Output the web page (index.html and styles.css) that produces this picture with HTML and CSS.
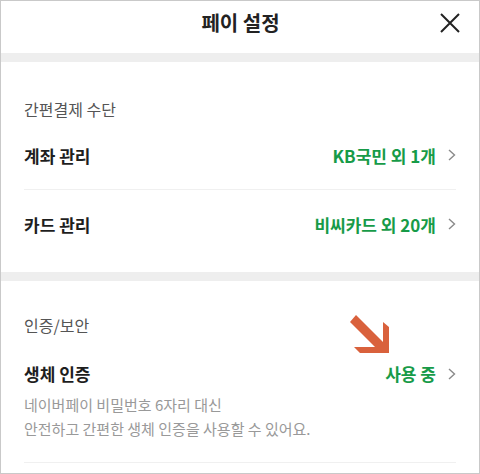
FILE: index.html
```html
<!DOCTYPE html>
<html>
<head>
  <title>페이 설정</title>
  <link rel="stylesheet" href="styles.css">
</head>
<body>
  <div class="page">
    <header class="topbar">
      <span></span>
      <h1>페이 설정</h1>
      <button class="close" aria-label="닫기">
        <svg width="20" height="20" viewBox="0 0 20 20"><path d="M1 1 L19 19 M19 1 L1 19" stroke="#222" stroke-width="2" fill="none"/></svg>
      </button>
    </header>

    <div class="band"></div>

    <section class="group">
      <h2>간편결제 수단</h2>
      <div class="row">
        <span class="label">계좌 관리</span>
        <span class="value">KB국민 외 1개</span>
        <svg class="chev" width="8" height="12" viewBox="0 0 8 12"><path d="M1 1 L6.5 6 L1 11" stroke="#8a8a8a" stroke-width="1.4" fill="none"/></svg>
      </div>
      <div class="row">
        <span class="label">카드 관리</span>
        <span class="value">비씨카드 외 20개</span>
        <svg class="chev" width="8" height="12" viewBox="0 0 8 12"><path d="M1 1 L6.5 6 L1 11" stroke="#8a8a8a" stroke-width="1.4" fill="none"/></svg>
      </div>
    </section>

    <div class="band"></div>

    <section class="group">
      <h2>인증/보안</h2>
      <div class="item">
        <div class="row-top">
          <span class="label">생체 인증</span>
          <span class="value">사용 중</span>
          <svg class="chev" width="8" height="12" viewBox="0 0 8 12"><path d="M1 1 L6.5 6 L1 11" stroke="#8a8a8a" stroke-width="1.4" fill="none"/></svg>
        </div>
        <p class="desc">네이버페이 비밀번호 6자리 대신<br>안전하고 간편한 생체 인증을 사용할 수 있어요.</p>
      </div>
    </section>

    <svg class="pointer" width="46" height="44" viewBox="0 0 46 44">
      <polygon points="12,5 39,32 39,12 45,17 45,43 16,43 10,37 31,37 6,12" fill="#d9613c"/>
    </svg>
  </div>
</body>
</html>
```

FILE: styles.css
```css
body {
  margin: 0;
  font-family: "Noto Sans CJK KR", "Noto Sans", sans-serif;
  background: #fff;
}

.page {
  position: relative;
  width: 480px;
  height: 474px;
  box-sizing: border-box;
  border: 1px solid #c9c9c9;
  overflow: hidden;
}

.topbar {
  height: 52px;
  box-sizing: border-box;
  display: grid;
  grid-template-columns: 1fr auto 1fr;
  align-items: center;
  padding: 0 19px 8px 20px;
}

.topbar h1 {
  margin: 0;
  font-size: 20px;
  line-height: 26px;
  font-weight: 700;
  color: #222;
}

.close {
  justify-self: end;
  background: none;
  border: none;
  padding: 0;
  width: 20px;
  height: 20px;
  cursor: pointer;
}

.band {
  height: 9px;
  background: #eeeeee;
}

.group {
  padding: 36px 23px 14px 23px;
}

.group h2 {
  margin: 0 0 1px;
  font-size: 16px;
  line-height: 22px;
  font-weight: 400;
  color: #555;
}

.group + .band + .group {
  padding-top: 33px;
}

.group + .band + .group h2 {
  margin-bottom: 4px;
}

.row {
  height: 68px;
  display: flex;
  align-items: center;
}

.row + .row {
  border-top: 1px solid #f0f0f0;
}

.label {
  flex: 1;
  font-size: 17px;
  font-weight: 700;
  color: #1e1e1e;
}

.value {
  font-size: 17px;
  font-weight: 700;
  color: #179b48;
}

.chev {
  margin-left: 12px;
}

.item {
  padding: 22px 0 21px;
  border-bottom: 1px solid #f0f0f0;
}

.row-top {
  display: flex;
  align-items: center;
  line-height: 24px;
}

.desc {
  margin: 7px 0 0;
  font-size: 15px;
  line-height: 24px;
  color: #999;
}

.pointer {
  position: absolute;
  left: 343px;
  top: 309px;
}
```
